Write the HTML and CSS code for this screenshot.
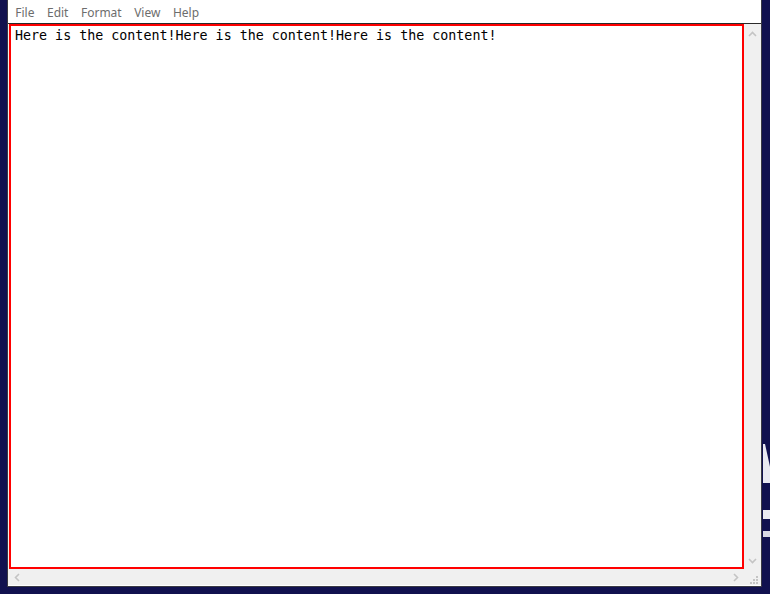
FILE: index.html
```html
<!DOCTYPE html>
<html lang="en">
<head>
<meta charset="utf-8">
<title>Notepad</title>
<link rel="stylesheet" href="styles.css">
</head>
<body>
<div class="desktop">
  <svg class="wallpaper" width="10" height="130" viewBox="0 0 10 130">
    <polygon points="1,14 3,14 10,46 10,53 1,53" fill="#e9e9f1"/>
    <rect x="1" y="80" width="9" height="9" fill="#e9e9f1"/>
    <rect x="1" y="101" width="9" height="6" fill="#d9d9e4"/>
  </svg>
  <div class="window">
    <nav class="menubar">
      <span class="menu-item">File</span>
      <span class="menu-item">Edit</span>
      <span class="menu-item">Format</span>
      <span class="menu-item">View</span>
      <span class="menu-item">Help</span>
    </nav>
    <div class="frame">
      <div class="edit">Here is the content!Here is the content!Here is the content!</div>
      <div class="vscroll">
        <svg class="arrow" width="9" height="6" viewBox="0 0 9 6"><polyline points="1,5 4.5,1.5 8,5" fill="none" stroke="#c4c4c4" stroke-width="1.6"/></svg>
        <svg class="arrow" width="9" height="6" viewBox="0 0 9 6"><polyline points="1,1 4.5,4.5 8,1" fill="none" stroke="#c4c4c4" stroke-width="1.6"/></svg>
      </div>
      <div class="hscroll">
        <svg class="arrow" width="6" height="9" viewBox="0 0 6 9"><polyline points="5,1 1.5,4.5 5,8" fill="none" stroke="#c4c4c4" stroke-width="1.6"/></svg>
        <svg class="arrow" width="6" height="9" viewBox="0 0 6 9"><polyline points="1,1 4.5,4.5 1,8" fill="none" stroke="#c4c4c4" stroke-width="1.6"/></svg>
      </div>
      <div class="grip">
        <svg width="8" height="8" viewBox="0 0 8 8" fill="#c4c4c4">
          <rect x="6" y="0" width="2" height="2"/>
          <rect x="3" y="3" width="2" height="2"/><rect x="6" y="3" width="2" height="2"/>
          <rect x="0" y="6" width="2" height="2"/><rect x="3" y="6" width="2" height="2"/><rect x="6" y="6" width="2" height="2"/>
        </svg>
      </div>
    </div>
  </div>
</div>
</body>
</html>
```

FILE: styles.css
```css
* { box-sizing: border-box; }
html, body { margin: 0; padding: 0; }
body { background: #11114f; }

.desktop {
  position: relative;
  width: 770px;
  height: 594px;
  overflow: hidden;
  background: #11114f;
}

.wallpaper {
  position: absolute;
  left: 762px;
  top: 430px;
}

.window {
  margin-left: 7px;
  width: 755px;
  height: 587px;
  background: #ffffff;
  border-left: 1px solid #3a3a44;
  border-right: 1px solid #3a3a44;
  border-bottom: 1px solid #3a3a44;
  display: flex;
  flex-direction: column;
  padding-bottom: 1px;
}

.menubar {
  height: 23px;
  display: flex;
  align-items: flex-start;
  padding: 2px 0 0 1px;
  font-family: "Noto Sans", "Open Sans", sans-serif;
  font-size: 12px;
  line-height: 22px;
  color: #6d6d6d;
}

.menu-item { padding: 0 6.25px; }

.frame {
  flex: 1;
  border-top: 1px solid #2a2a2a;
  display: grid;
  grid-template-columns: 1fr 17px;
  grid-template-rows: 1fr 16px;
  background: #f0f0f0;
  padding-left: 1px;
}

.edit {
  background: #ffffff;
  border: 2px solid #ff0000;
  padding: 2px 4px;
  font-family: "DejaVu Sans Mono", "Liberation Mono", monospace;
  font-size: 13.33px;
  color: #000000;
  white-space: pre;
  overflow: hidden;
}

.vscroll {
  background: #f0f0f0;
  display: flex;
  flex-direction: column;
  justify-content: space-between;
  align-items: center;
  padding: 7px 0 5px 0;
}

.hscroll {
  background: #f0f0f0;
  display: flex;
  justify-content: space-between;
  align-items: center;
  padding: 1px 5px 0 5px;
}

.arrow { display: block; }

.grip {
  background: #f0f0f0;
  display: flex;
  align-items: flex-end;
  justify-content: flex-end;
  padding: 0 3px 1px 0;
}
```
